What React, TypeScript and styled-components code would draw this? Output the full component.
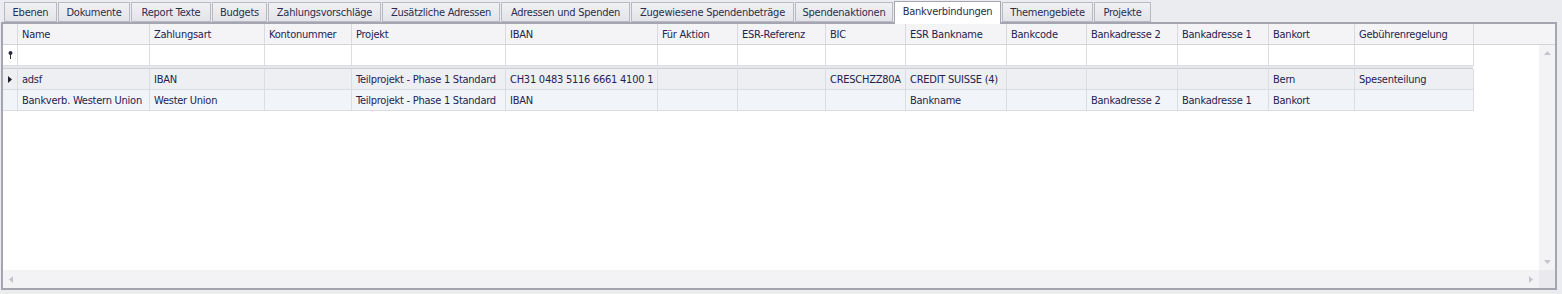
import React from 'react';
import styled, { createGlobalStyle } from 'styled-components';

const GlobalStyle = createGlobalStyle`
    html, body {
        margin: 0;
        padding: 0;
        background: #ebecf0;
        font-family: Tahoma, "DejaVu Sans Condensed", "Liberation Sans", sans-serif;
        font-size: 11px;
        letter-spacing: -0.25px;
        color: #1f2350;
    }
`;

const Page = styled.div`
    width: 1562px;
    height: 294px;
    padding-top: 1px;
    box-sizing: border-box;
`;

const TabStrip = styled.div`
    display: flex;
    align-items: flex-end;
    height: 21px;
    padding-left: 4px;
`;

const Tab = styled.div<{ $w: number; $active?: boolean }>`
    width: ${(p) => p.$w - 1}px;
    margin-right: 1px;
    box-sizing: border-box;
    height: ${(p) => (p.$active ? 23 : 20)}px;
    margin-bottom: ${(p) => (p.$active ? -2 : 0)}px;
    display: flex;
    align-items: center;
    justify-content: center;
    padding-bottom: ${(p) => (p.$active ? 3 : 0)}px;
    border: 1px solid ${(p) => (p.$active ? '#a4a5b1' : '#b8b9c3')};
    border-bottom: ${(p) => (p.$active ? 'none' : '1px solid #b8b9c3')};
    background: ${(p) => (p.$active ? '#ffffff' : 'linear-gradient(#f1f1f4, #e3e4e9)')};
    color: #2a2d4f;
    white-space: nowrap;
    position: relative;
    z-index: ${(p) => (p.$active ? 2 : 0)};
`;

const Panel = styled.div`
    margin-left: 1px;
    width: 1556px;
    height: 268px;
    box-sizing: border-box;
    border: 2px solid #a4a5b1;
    background: #ffffff;
    display: flex;
    flex-direction: column;
    position: relative;
    z-index: 1;
`;

const cols = [132, 115, 87, 154, 152, 80, 88, 80, 101, 80, 91, 91, 86, 119];
const template = `15px ${cols.map((c) => c + 'px').join(' ')}`;

const HeaderRow = styled.div`
    display: grid;
    grid-template-columns: ${template} 1fr;
    height: 21px;
    background: #f4f4f6;
    border-bottom: 1px solid #d3d4da;
    box-sizing: border-box;
`;

const HeaderCell = styled.div`
    border-right: 1px solid #d9d9df;
    padding-left: 4px;
    display: flex;
    align-items: center;
    white-space: nowrap;
    overflow: hidden;
    &:last-child {
        border-right: none;
    }
`;

const Middle = styled.div`
    flex: 1;
    display: flex;
    min-height: 0;
`;

const Body = styled.div`
    flex: 1;
`;

const Row = styled.div<{ $bg: string }>`
    display: grid;
    grid-template-columns: ${template};
    width: max-content;
    height: 21px;
    box-sizing: border-box;
    background: ${(p) => p.$bg};
    border-bottom: 1px solid #dcdde3;
`;

const Cell = styled.div`
    border-right: 1px solid #dcdde3;
    padding-left: 4px;
    display: flex;
    align-items: center;
    white-space: nowrap;
    overflow: hidden;
`;

const Indicator = styled.div`
    border-right: 1px solid #dcdde3;
    display: flex;
    align-items: center;
    justify-content: center;
`;

const Separator = styled.div`
    width: 1470px;
    height: 3px;
    box-sizing: border-box;
    background: #e6e7eb;
    border-bottom: 1px solid #cfd0d7;
`;

const VScroll = styled.div`
    width: 16px;
    background: #f3f3f6;
    display: flex;
    flex-direction: column;
    justify-content: space-between;
    align-items: center;
    padding: 6px 0;
`;

const HScrollRow = styled.div`
    height: 18px;
    display: flex;
    background: #f3f3f6;
`;

const HScroll = styled.div`
    flex: 1;
    display: flex;
    justify-content: space-between;
    align-items: center;
    padding: 0 6px 0 6px;
`;

const Corner = styled.div`
    width: 16px;
    background: #e9e9ee;
`;

const Arrow = ({ dir }: { dir: 'up' | 'down' | 'left' | 'right' }) => {
    const pts = {
        up: '0,4 3.5,0 7,4',
        down: '0,0 3.5,4 7,0',
        left: '4,0 0,3.5 4,7',
        right: '0,0 4,3.5 0,7',
    }[dir];
    const horiz = dir === 'left' || dir === 'right';
    return (
        <svg width={horiz ? 4 : 7} height={horiz ? 7 : 4}>
            <polygon points={pts} fill="#c4c5cc" />
        </svg>
    );
};

const headers = [
    'Name', 'Zahlungsart', 'Kontonummer', 'Projekt', 'IBAN', 'Für Aktion', 'ESR-Referenz',
    'BIC', 'ESR Bankname', 'Bankcode', 'Bankadresse 2', 'Bankadresse 1', 'Bankort', 'Gebührenregelung',
];

const rows = [
    ['adsf', 'IBAN', '', 'Teilprojekt - Phase 1 Standard', 'CH31 0483 5116 6661 4100 1', '', '',
        'CRESCHZZ80A', 'CREDIT SUISSE (4)', '', '', '', 'Bern', 'Spesenteilung'],
    ['Bankverb. Western Union', 'Wester Union', '', 'Teilprojekt - Phase 1 Standard', 'IBAN', '', '',
        '', 'Bankname', '', 'Bankadresse 2', 'Bankadresse 1', 'Bankort', ''],
];

const tabs: [string, number][] = [
    ['Ebenen', 54], ['Dokumente', 73], ['Report Texte', 81], ['Budgets', 56],
    ['Zahlungsvorschläge', 114], ['Zusätzliche Adressen', 119], ['Adressen und Spenden', 130],
    ['Zugewiesene Spendenbeträge', 164], ['Spendenaktionen', 99], ['Bankverbindungen', 108],
    ['Themengebiete', 92], ['Projekte', 58],
];

function App() {
    return (
        <Page>
            <GlobalStyle />
            <TabStrip>
                {tabs.map(([t, w]) => (
                    <Tab key={t} $w={w} $active={t === 'Bankverbindungen'}>
                        {t}
                    </Tab>
                ))}
            </TabStrip>
            <Panel>
                <HeaderRow>
                    <HeaderCell />
                    {headers.map((h) => (
                        <HeaderCell key={h}>{h}</HeaderCell>
                    ))}
                    <HeaderCell />
                </HeaderRow>
                <Middle>
                    <Body>
                        <Row $bg="#ffffff">
                            <Indicator>
                                <svg width="5" height="8">
                                    <circle cx="2.5" cy="2" r="2" fill="#2b2b3a" />
                                    <rect x="2" y="3" width="1" height="5" fill="#2b2b3a" />
                                </svg>
                            </Indicator>
                            {headers.map((h) => (
                                <Cell key={h} />
                            ))}
                        </Row>
                        <Separator />
                        {rows.map((r, i) => (
                            <Row key={i} $bg={i === 0 ? '#eeeff2' : '#f1f4f9'}>
                                <Indicator>
                                    {i === 0 && (
                                        <svg width="4" height="7">
                                            <polygon points="0,0 4,3.5 0,7" fill="#1e1e2a" />
                                        </svg>
                                    )}
                                </Indicator>
                                {r.map((v, j) => (
                                    <Cell key={j}>{v}</Cell>
                                ))}
                            </Row>
                        ))}
                    </Body>
                    <VScroll>
                        <Arrow dir="up" />
                        <Arrow dir="down" />
                    </VScroll>
                </Middle>
                <HScrollRow>
                    <HScroll>
                        <Arrow dir="left" />
                        <Arrow dir="right" />
                    </HScroll>
                    <Corner />
                </HScrollRow>
            </Panel>
        </Page>
    );
}

export default App;
